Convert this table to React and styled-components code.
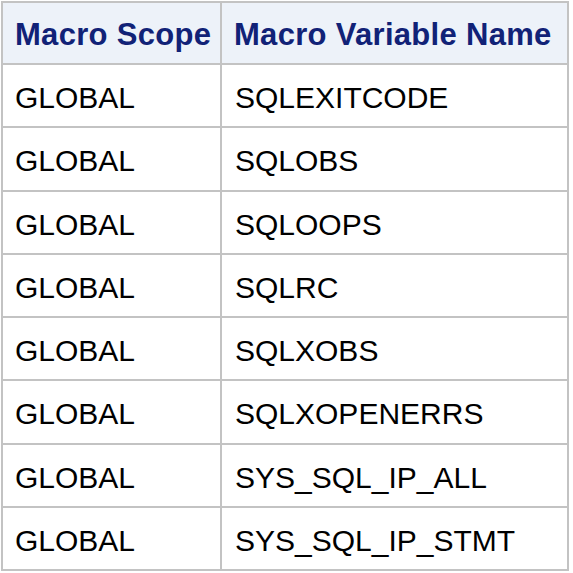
import React from 'react';
import styled, { createGlobalStyle } from 'styled-components';

const GlobalStyle = createGlobalStyle`
  html, body {
    margin: 0;
    padding: 0;
    background: #ffffff;
  }
  body {
    font-family: "Liberation Sans", Arial, sans-serif;
  }
`;

const Table = styled.div`
  margin: 1px 0 0 1px;
  width: 568px;
  height: 570px;
  box-sizing: border-box;
  padding: 2px;
  display: grid;
  grid-template-columns: 217px 1fr;
  grid-template-rows: 60px repeat(8, 1fr);
  gap: 2px;
  background: #c3c3c3;
`;

const HeadCell = styled.div`
  display: flex;
  align-items: center;
  padding: 4px 0 0 12px;
  background: #edf2f9;
  color: #112277;
  font-weight: 700;
  font-size: 31px;
  letter-spacing: 0.3px;
  white-space: nowrap;
`;

const Cell = styled.div`
  display: flex;
  align-items: center;
  padding: 5px 0 0 ${p => p.$indent}px;
  background: #ffffff;
  color: #000000;
  font-size: 30px;
  white-space: nowrap;
`;

const ROWS = [
  ['GLOBAL', 'SQLEXITCODE'],
  ['GLOBAL', 'SQLOBS'],
  ['GLOBAL', 'SQLOOPS'],
  ['GLOBAL', 'SQLRC'],
  ['GLOBAL', 'SQLXOBS'],
  ['GLOBAL', 'SQLXOPENERRS'],
  ['GLOBAL', 'SYS_SQL_IP_ALL'],
  ['GLOBAL', 'SYS_SQL_IP_STMT']
];

const App = () => (
  <>
    <GlobalStyle />
    <Table>
      <HeadCell>Macro Scope</HeadCell>
      <HeadCell>Macro Variable Name</HeadCell>
      {ROWS.map(([scope, name], i) => (
        <React.Fragment key={i}>
          <Cell $indent={12}>{scope}</Cell>
          <Cell $indent={13}>{name}</Cell>
        </React.Fragment>
      ))}
    </Table>
  </>
);

export default App;
